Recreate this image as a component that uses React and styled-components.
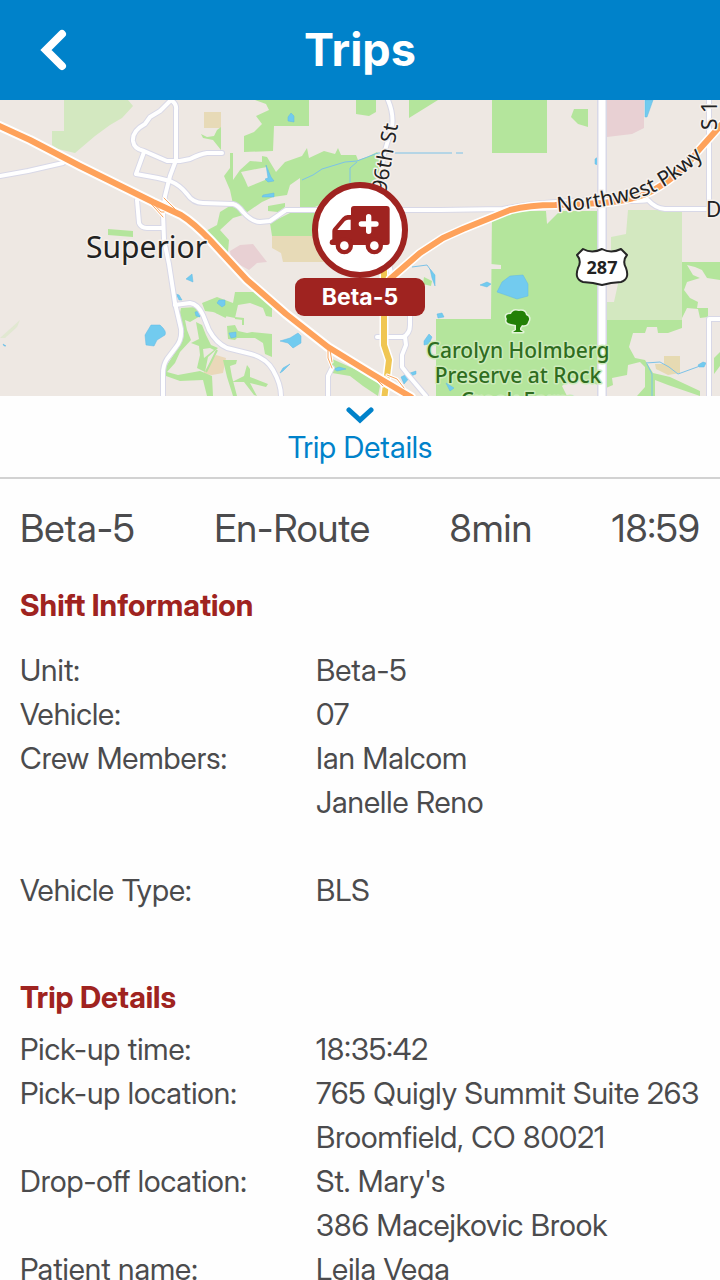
import React, { useState } from 'react';
import styled, { createGlobalStyle } from 'styled-components';

const BLUE = '#0082ca';
const RED = '#9f2320';

const GlobalStyle = createGlobalStyle`
	* {
		box-sizing: border-box;
	}

	body {
		margin: 0;
		background: #fefefe;
		color: #4b4b4d;
		font-family: 'Inter Display', Inter, 'Liberation Sans', sans-serif;
	}
`;

const Page = styled.div`
	display: flex;
	flex-direction: column;
	height: 100vh;
`;

const Header = styled.header`
	display: grid;
	grid-template-columns: 108px 1fr 108px;
	flex: none;
	height: 100px;
	background: ${BLUE};
	color: #fff;
`;

const BackButton = styled.button`
	display: flex;
	align-items: center;
	justify-content: center;
	padding: 0;
	border: 0;
	background: none;
	color: inherit;
	cursor: pointer;
`;

const Title = styled.h1`
	margin: 0;
	font-family: Inter, sans-serif;
	font-size: 45px;
	line-height: 100px;
	font-weight: 700;
	text-align: center;
`;

const MapArea = styled.div`
	position: relative;
	flex: none;
	height: 296px;
	overflow: hidden;
	background: #eee8e3;

	> svg {
		display: block;
		width: 100%;
		height: 100%;
	}
`;

const Marker = styled.div`
	position: absolute;
	left: 50%;
	top: 82px;
	display: flex;
	flex-direction: column;
	align-items: center;
	transform: translateX(-50%);
`;

const MarkerIcon = styled.div`
	display: flex;
	align-items: center;
	justify-content: center;
	width: 96px;
	height: 96px;
	border: 6px solid ${RED};
	border-radius: 50%;
	background: #fff;
`;

const MarkerLabel = styled.span`
	width: 130px;
	border-radius: 9px;
	background: ${RED};
	color: #fff;
	font-family: Inter, sans-serif;
	font-size: 23px;
	line-height: 38px;
	font-weight: 700;
	text-align: center;
`;

const Toggle = styled.button`
	display: flex;
	flex-direction: column;
	align-items: center;
	flex: none;
	gap: 4px;
	height: 83px;
	padding: 10px 0 0;
	border: 0;
	border-bottom: 2px solid #d2d2d2;
	background: none;
	color: ${BLUE};
	font-family: inherit;
	font-size: 30px;
	line-height: 38px;
	cursor: pointer;
`;

const Details = styled.main`
	flex: 1;
	min-height: 0;
	padding: 0 20px;
	overflow-y: auto;
	scrollbar-width: none;
`;

const Summary = styled.div`
	display: flex;
	justify-content: space-between;
	padding: 24px 0 30px;
	font-size: 38px;
	line-height: 50px;
`;

const Section = styled.section`
	margin-bottom: 63px;
`;

const SectionTitle = styled.h2`
	margin: 0 0 ${props => props.$gap}px;
	color: ${RED};
	font-size: 30px;
	line-height: 44px;
	font-weight: 700;
`;

const Fields = styled.dl`
	display: grid;
	grid-template-columns: 296px 1fr;
	margin: 0;
	font-size: 30px;
	line-height: 44px;
`;

const Name = styled.dt`
	white-space: nowrap;
`;

const Value = styled.dd`
	margin: 0;
	padding-bottom: ${props => (props.$spaced ? 44 : 0)}px;
	white-space: nowrap;

	span {
		display: block;
	}
`;

const shift = [
	{ name: 'Unit:', lines: ['Beta-5'] },
	{ name: 'Vehicle:', lines: ['07'] },
	{ name: 'Crew Members:', lines: ['Ian Malcom', 'Janelle Reno'], spaced: true },
	{ name: 'Vehicle Type:', lines: ['BLS'] }
];

const trip = [
	{ name: 'Pick-up time:', lines: ['18:35:42'] },
	{
		name: 'Pick-up location:',
		lines: ['765 Quigly Summit Suite 263', 'Broomfield, CO 80021']
	},
	{ name: 'Drop-off location:', lines: ["St. Mary's", '386 Macejkovic Brook'] },
	{ name: 'Patient name:', lines: ['Leila Vega'] }
];

// white streets, drawn twice: a wide bluish casing, then the fill
const streets = [
	'M0 176 L28 171 L63 163',
	'M171 100 L160 111 L150 117 L145 124 Q132 131 133 141 Q134 149 144 151 L167 161 H180 L190 159 Q200 154 207 153 H222',
	'M171 100 Q177 104 176 110 V160 L170 176 L165 196 L163 213 L164 240 L169 264 L175 303 L181 329 Q182 340 176 347 L167 359 Q163 365 163 374 V396',
	'M144 152 L136 174 L158 178 L170 181 Q180 185 187 194 Q193 203 203 203 L233 204 Q238 205 243 212 Q252 222 260 222 L270 221 L286 210 H440 L503 209 Q540 201 603 200 Q636 202 648 200 Q655 208 665 209 H709',
	'M137 200 L139 223 Q141 228 147 228 H162',
	'M175 305 L190 303 Q198 304 203 315 L209 330 Q216 343 227 348 L251 354 Q266 358 273 370 Q281 384 281 396',
	'M388 100 Q394 114 392 127 L383 157 L380 190 Q376 210 379 226 L392 276',
	'M328 396 V376 L332 368',
	'M377 337 H403 Q410 334 410 325 V312',
	'M405 337 L406 345 L402 355 V367 L409 376 L426 396',
	'M709 100 V209',
	'M720 319 H709 V396'
];

const highway =
	'M-5 124 L30 140 L80 166 L153 202 L181 215 Q194 223 211 241 L247 280 L286 314 L328 347 L372 374 L411 397';
const parkway =
	'M390 279 L420 253 L443 238 L463 229 L510 210 Q530 205 555 205 L603 203 Q635 200 652 191 Q682 174 697 152 L722 124';
const ramps =
	'M146 198 L163 217 M152 202 L161 212 H164 M164 198 L178 212 M328 350 V358 L332 368 M330 350 L332 362 M370 373 L383 386 M387 375 L397 379 L404 388';

const BackIcon = () => (
	<svg width='30' height='44' viewBox='0 0 30 44' fill='none'>
		<path d='M23 6 L7 22 L23 38' stroke='currentColor' strokeWidth='8' strokeLinecap='round' />
	</svg>
);

const ChevronDown = () => (
	<svg width='28' height='18' viewBox='0 0 28 18' fill='none'>
		<path d='M3 4 L14 14 L25 4' stroke='currentColor' strokeWidth='5' strokeLinecap='round' />
	</svg>
);

const Ambulance = () => (
	<svg width='62' height='50' viewBox='58 75 186 150'>
		<path
			fill={RED}
			d='M133 78 H231 Q240 78 240 87 V187 Q240 195 232 195 H67 Q60 195 60 187 Q60 180 68 178 V153 Q68 149 71 145 L98 113 Q105 105 114 105 H124 V87 Q124 78 133 78 Z'
		/>
		<path fill='#fff' d='M83 150 L105 124 Q109 119 115 119 H123 V150 Z' />
		<circle cx='104' cy='197' r='26' fill={RED} />
		<circle cx='194' cy='197' r='26' fill={RED} />
		<circle cx='104' cy='197' r='13' fill='#fff' />
		<circle cx='194' cy='197' r='13' fill='#fff' />
		<path d='M177 110 V154 M155 132 H199' stroke='#fff' strokeWidth='16' strokeLinecap='round' />
	</svg>
);

const MapDrawing = () => (
	<svg viewBox='0 100 720 296' preserveAspectRatio='xMidYMid slice' role='img' aria-label='Map'>
		<rect y='100' width='720' height='296' fill='#eee8e3' />

		<g fill='#d3e8c0'>
			<path d='M64 100 H128 L133 106 L122 118 L110 125 L95 136 L75 153 L58 149 L52 145 V131 H64 Z' />
			<path d='M628 210 H682 V320 H604 V302 H614 L618 284 L611 266 V237 L626 234 Z' />
			<path d='M0 338 L20 320 L17 327 L5 338 Z' opacity='.5' />
		</g>

		<g fill='#e7dab7'>
			<path d='M204 112 H221 V128 H204 Z' />
			<path d='M272 235 H322 L330 262 H283 L281 253 L272 248 Z' />
		</g>
		<path d='M203 374 L210 363 L216 355 L226 358 L223 373 L212 375 Z' fill='#ead8b9' />

		<g fill='#e8d0d3'>
			<path d='M607 100 H644 V128 L632 134 L607 137 Z' />
			<path d='M230 251 L240 245 L253 244 L267 262 L257 263 L249 270 L231 260 Z' />
		</g>

		<g fill='#b4e59c'>
			<path d='M255 100 H309 V126 H274 L273 151 L244 152 V136 L254 132 L262 124 L256 116 L269 110 L266 104 Z' />
			<path d='M356 100 H376 V112 L369 116 L356 114 Z' />
			<path d='M409 100 H438 L409 118 Z' />
			<path d='M492 100 H547 V153 H492 Z' />
			<path d='M588 109 V127 L578 124 L571 117 L574 109 Z' />
			<path d='M108 229 L133 231 V237 L108 235 Z' />
			<path d='M201 134 L207 137 L214 136 L217 130 L221 127 V150 L213 140 L203 138 Z' />
			<path d='M230 153 H233 V180 L240 170 L250 161 L262 162 V156 L267 157 L276 172 L285 162 L302 156 L307 148 L309 158 L324 151 L335 154 L338 148 L341 155 L356 155 L358 160 L367 157 L377 152 L383 160 L375 185 L330 200 L315 207 H300 V178 L290 185 L287 195 L273 197 L262 202 L243 215 L233 218 L220 230 L229 240 L228 252 L218 250 L204 232 L217 225 L220 212 L233 204 L230 190 L224 176 L230 168 Z' />
			<path d='M268 206 L285 203 V207 L278 212 L268 211 Z' />
			<path d='M270 223 L290 213 H318 L312 236 H272 Z' />
			<path d='M492 211 H598 V396 H436 V319 H491 Z' />
			<path d='M604 320 H682 V262 H720 V280 L707 278 L702 270 L695 267 L687 265 L693 275 L700 278 L687 282 L684 290 L690 298 L698 302 L697 308 L708 308 V317 L700 318 L698 309 L687 308 L682 318 V328 L668 333 H658 L657 327 H647 L645 333 H633 L629 347 L635 358 L645 360 L653 373 L670 377 L700 391 V396 L668 385 L655 380 V396 H637 L645 387 V367 L640 362 L628 365 L627 375 L612 378 L613 385 L606 388 H604 Z' />
			<path d='M202 303 L217 297 L233 303 L235 292 H255 L272 307 V317 L266 316 L263 308 L250 303 L238 305 L235 318 L225 316 L213 312 L205 311 Z' />
			<path d='M227 326 L235 325 L238 331 L247 333 L252 332 L272 334 V357 L265 354 L263 343 L255 338 H237 L235 340 L228 339 Z' />
			<path d='M330 358 L350 367 L374 377 L380 386 L378 396 L363 386 L350 376 L332 373 Z' />
			<path d='M181 308 L197 307 L202 315 L190 322 L185 320 L187 330 L191 340 L180 352 L175 363 L167 372 L178 375 L200 371 L212 376 L213 396 H207 L203 380 L180 381 L166 376 L165 368 L180 345 L184 335 L179 318 Z' />
			<path d='M196 322 L202 325 L206 335 L211 345 L218 348 L208 357 L205 372 L197 368 L200 355 L199 346 L191 343 L199 339 Z' />
			<path d='M223 360 H237 L236 364 L230 366 L232 377 L237 396 H233 L227 377 Z' />
			<path d='M247 365 L250 369 V377 L268 384 L266 387 L250 383 L257 396 L254 395 L244 382 L232 382 L244 376 Z' />
			<path d='M424 277 L432 281 L431 286 L423 284 Z' />
			<path d='M714 358 L720 352 V366 L714 374 Z' />
		</g>

		<path d='M235 318 L243 319 V325 M217 350 L206 372 M216 312 L226 317' fill='none' stroke='#b4e59c' strokeWidth='2' />

		<g fill='#eee8e3'>
			<path d='M241 172 L267 167 L270 178 L248 187 L245 180 Z' />
			<path d='M203 349 L210 348 L214 350 L204 358 Z' />
			<path d='M546 211 H560 L547 224 Z' />
			<path d='M491 264 L501 265 V269 H491 Z' />
			<path d='M562 386 L571 378 L580 379 L598 385 V396 H567 Z' />
			<path d='M604 237 L611 236 L619 229 V211 H604 Z' />
		</g>
		<path d='M655 364 L664 364 V356 H680 V373 L668 375 L656 369 Z' fill='#e6dab2' />

		<g fill='#72cbef' stroke='#61b8e4' strokeWidth='.5'>
			<path d='M151 325 L160 325 Q167 331 165 335 L157 340 L154 346 L146 345 L145 335 Z' />
			<path d='M186 279 L192 274 L193 282 Z' />
			<path d='M176 294 L179 295 L182 300 L179 300 Z' />
			<path d='M195 312 L200 311 V317 L196 316 Z' />
			<path d='M217 303 L219 300 L225 300 V305 L222 307 Z' />
			<path d='M229 333 L236 332 V337 L231 338 Z' />
			<path d='M280 341 L290 338 L298 333 L301 336 V343 L293 348 L288 343 Z' />
			<path d='M280 373 L283 368 L290 364 L283 371 Z' />
			<path d='M334 369 L339 367 L346 369 L337 371 Z' />
			<path d='M288 117 L291 113 L294 116 V122 L288 121 Z' />
			<path d='M266 165 L271 177 L274 181 L268 182 L265 179 L268 178 Z' />
			<path d='M263 195 L274 193 V197 H262 Z' />
			<path d='M497 292 L502 282 L510 276 L523 275 L528 284 V296 L517 299 Z' />
			<path d='M480 285 L487 282 L491 284 L487 287 Z' />
			<path d='M595 159 L598 157 V165 L595 164 Z' />
			<path d='M645 100 H653 L647 117 H645 Z' />
			<path d='M437 314 L442 313 L444 317 L438 318 Z' />
			<path d='M424 341 L429 334 L432 337 L429 344 L424 345 Z' />
			<path d='M407 374 L416 371 L416 374 L411 376 L404 384 L401 377 Z' />
			<path d='M430 269 L435 275 V286 L432 278 Z' />
			<path d='M446 383 L454 388 L450 391 Z' />
			<path d='M698 365 L703 362 L706 363 L704 367 L699 367 Z' />
			<path d='M3 344 L6 346 L4 346 Z' />
		</g>
		<g fill='none' stroke='#7cc2e8' strokeWidth='1'>
			<path d='M302 180 L313 175 L322 169 L345 162 L357 161 L378 153 H440' />
			<path d='M357 162 L350 168 L350 183' />
			<path d='M440 153 H463' strokeDasharray='12 4' />
			<path d='M646 363 L660 362 L669 367 L678 374 L700 366 M647 364 L652 374 V396 M412 267 L427 265 L432 272' />
		</g>

		{/* Roads */}
		<g fill='none' strokeLinecap='round' strokeLinejoin='round'>
			<g stroke='#d8d8e7'>
				{streets.map(d => (
					<path key={d} d={d} strokeWidth='6' />
				))}
				<path d='M602 95 V400' strokeWidth='10' />
			</g>
			<g stroke='#fff'>
				{streets.map(d => (
					<path key={d} d={d} strokeWidth='4' />
				))}
				<path d='M602 95 V400' strokeWidth='7' />
			</g>
			<path d='M384 270 V345 L389 360 L384 400' stroke='#fff' strokeWidth='9' />
			<path d='M384 270 V345 L389 360 L384 400' stroke='#f0c652' strokeWidth='6' />
			<path d={highway} stroke='#fff' strokeWidth='10' />
			<path d={parkway} stroke='#fff' strokeWidth='9' />
			<path d={ramps} stroke='#fff' strokeWidth='3' />
			<path d={ramps} stroke='#f9a55f' strokeWidth='1' />
			<path d={highway} stroke='#fea25b' strokeWidth='6' />
			<path d={parkway} stroke='#fea25b' strokeWidth='6' />
		</g>

		{/* Labels */}
		<g
			fontFamily="'Noto Sans', 'Open Sans', sans-serif"
			fill='#222'
			stroke='#f6f1ed'
			strokeWidth='3'
			strokeLinejoin='round'
			paintOrder='stroke'
		>
			<text x='86' y='258' fontSize='30'>Superior</text>
			<text transform='translate(386 193) rotate(-80)' fontSize='21'>96th St</text>
			<path id='parkway-label' d='M557 212 Q612 208 650 194 Q688 177 722 136' fill='none' stroke='none' />
			<text fontSize='21'>
				<textPath href='#parkway-label'>Northwest Pkwy</textPath>
			</text>
			<text transform='translate(717 130) rotate(-90)' fontSize='21'>S 1</text>
			<text x='706' y='217' fontSize='21'>D</text>
			<g fill='#2f6d20' stroke='#cdebbb' textAnchor='middle' fontSize='21' fontWeight='500'>
				<text x='518' y='358'>Carolyn Holmberg</text>
				<text x='518' y='383'>Preserve at Rock</text>
				<text x='518' y='408'>Creek Farm</text>
			</g>
		</g>

		{/* Park tree */}
		<path
			d='M513 332 L516 330 V325 L511 324 Q505 323 507 319 Q504 314 511 314 Q513 309 519 311 Q525 310 526 315 Q531 317 528 322 Q527 326 522 325 L520 328 V330 L523 332 Z'
			fill='#238006'
			stroke='#e3f4d9'
			strokeWidth='3'
			strokeLinejoin='round'
			paintOrder='stroke'
		/>

		{/* Route shield */}
		<path
			d='M583 249 Q592 254 602 249 Q611 254 621 249 L627 255 Q622 261 626 268 Q630 279 621 282 L611 283 L602 285 L593 283 L583 282 Q574 279 578 268 Q582 261 577 255 Z'
			fill='#fff'
			stroke='#262626'
			strokeWidth='2'
			strokeLinejoin='round'
		/>
		<text
			x='602'
			y='274'
			textAnchor='middle'
			fontFamily="'Noto Sans', 'Open Sans', sans-serif"
			fontSize='18'
			fontWeight='700'
			fill='#222'
		>
			287
		</text>
	</svg>
);

const FieldList = ({ items }) => (
	<Fields>
		{items.map(item => (
			<React.Fragment key={item.name}>
				<Name>{item.name}</Name>
				<Value $spaced={item.spaced}>
					{item.lines.map(line => (
						<span key={line}>{line}</span>
					))}
				</Value>
			</React.Fragment>
		))}
	</Fields>
);

const App = () => {
	const [open, setOpen] = useState(true);

	return (
		<Page>
			<GlobalStyle />
			<Header>
				<BackButton type='button' aria-label='Back'>
					<BackIcon />
				</BackButton>
				<Title>Trips</Title>
			</Header>
			<MapArea>
				<MapDrawing />
				<Marker>
					<MarkerIcon>
						<Ambulance />
					</MarkerIcon>
					<MarkerLabel>Beta-5</MarkerLabel>
				</Marker>
			</MapArea>
			<Toggle type='button' aria-expanded={open} onClick={() => setOpen(!open)}>
				<ChevronDown />
				Trip Details
			</Toggle>
			{open ? (
				<Details>
					<Summary>
						<span>Beta-5</span>
						<span>En-Route</span>
						<span>8min</span>
						<span>18:59</span>
					</Summary>
					<Section>
						<SectionTitle $gap={21}>Shift Information</SectionTitle>
						<FieldList items={shift} />
					</Section>
					<Section>
						<SectionTitle $gap={8}>Trip Details</SectionTitle>
						<FieldList items={trip} />
					</Section>
				</Details>
			) : null}
		</Page>
	);
};

export default App;
